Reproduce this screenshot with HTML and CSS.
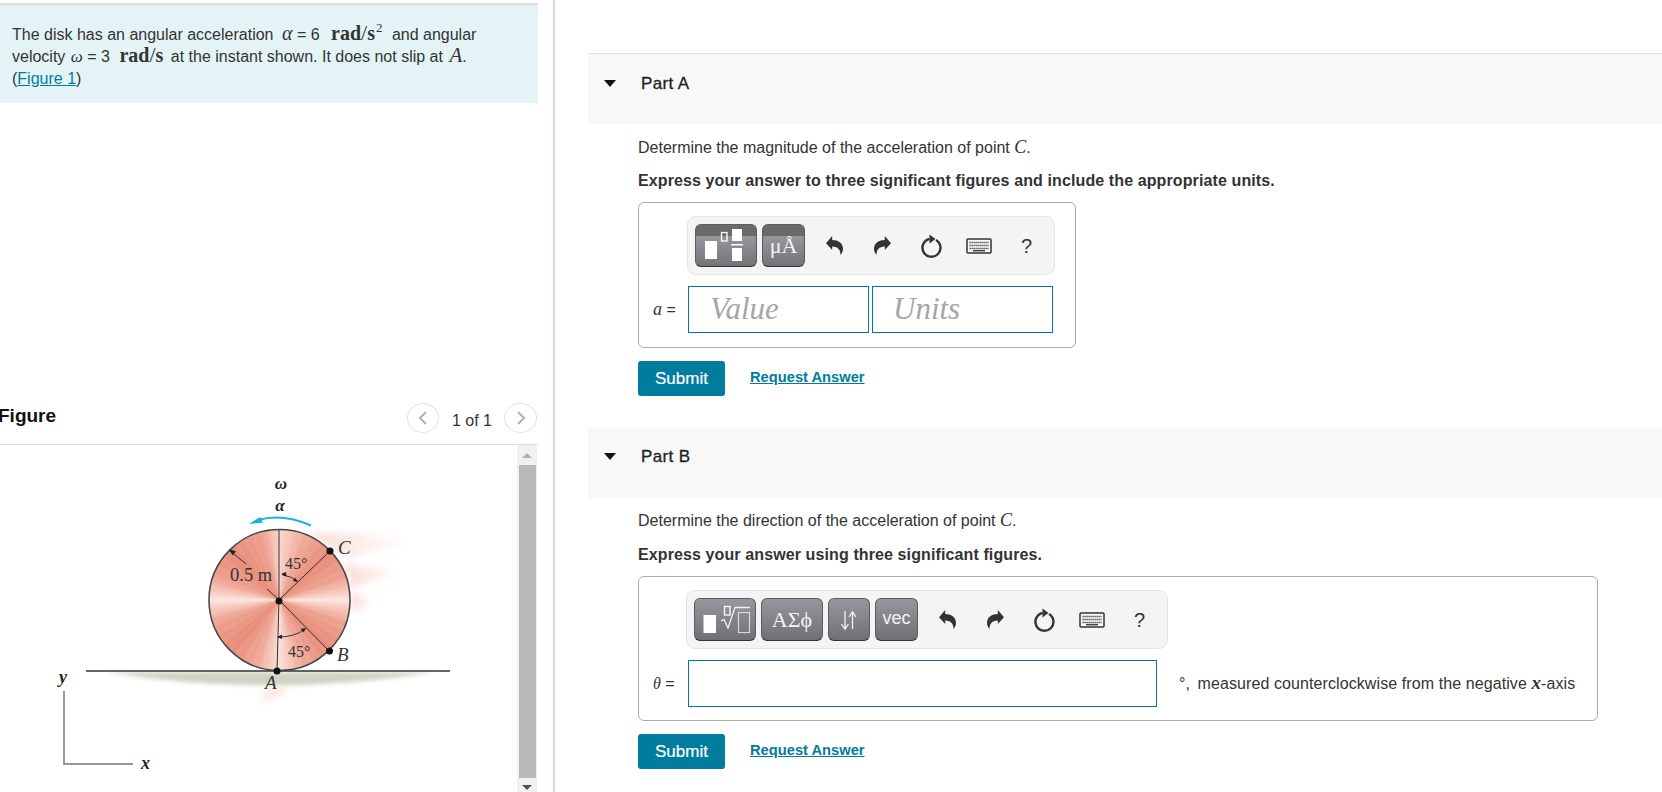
FILE: index.html
```html
<!DOCTYPE html>
<html lang="en">
<head>
<meta charset="utf-8">
<title>Disk problem</title>
<link rel="stylesheet" href="styles.css">
</head>
<body>
<svg class="defs" width="0" height="0" aria-hidden="true">
  <defs>
    <symbol id="i-undo" viewBox="0 0 17 19"><path d="M0 7.300 6.200 0v4C12 4 17 7 17 13c0 2-.8 4-2.500 6 0-5-2.500-8.500-8.300-8.500V14Z"/></symbol>
    <symbol id="i-redo" viewBox="0 0 17 19"><path d="M17 7.300 10.800 0v4C5 4 0 7 0 13c0 2 .8 4 2.500 6 0-5 2.500-8.500 8.300-8.500V14Z"/></symbol>
    <symbol id="i-reset" viewBox="0 0 24 24"><path class="ring" d="M10.500 5A9 9 0 1 0 17 6"/><path d="M10.500.5 16.500 5l-6 4.500Z"/></symbol>
    <symbol id="i-kb" viewBox="0 0 26 16">
      <rect class="kb" x="1" y="1" width="24" height="14" rx="1"/>
      <path class="keys" d="M3.500 4.500h19M3.500 7.500h19M3.500 10.500h19"/>
      <path class="kbar" d="M7 12.700h12"/>
    </symbol>
  </defs>
</svg>
<div class="page">
  <section class="left">
    <div class="intro">
      The disk has an angular acceleration <i class="mi">α</i> = 6 <span class="unit unit-1">rad<span class="sl">/</span>s<sup>2</sup></span> and angular<br>
      velocity <i class="mw">ω</i> = 3 <span class="unit unit-2">rad<span class="sl">/</span>s</span> at the instant shown. It does not slip at <i class="mb mb-a">A</i>.<br>
      (<a href="#fig">Figure 1</a>)
    </div>
    <header class="fig-head" id="fig">
      <h2 class="fig-title">Figure</h2>
      <button class="nav nav-prev" type="button" aria-label="Previous"><svg width="10" height="16" viewBox="0 0 10 16"><path d="M8 2 2 8l6 6"/></svg></button>
      <span class="count">1 of 1</span>
      <button class="nav nav-next" type="button" aria-label="Next"><svg width="10" height="16" viewBox="0 0 10 16"><path d="m2 2 6 6-6 6"/></svg></button>
    </header>
    <div class="fig-body">
      <div class="canvas">
        <div class="disk"></div>
        <svg class="diagram" width="517" height="346" viewBox="0 446 517 346">
          <defs>
            <linearGradient id="st" x1="0" x2="1" y1="0" y2="0"><stop offset="0" stop-color="#f5c0b3" stop-opacity=".6"/><stop offset="1" stop-color="#f8d5cc" stop-opacity="0"/></linearGradient>
            <linearGradient id="dn" x1="1" x2="0" y1="0" y2="1"><stop offset="0" stop-color="#f6b9aa" stop-opacity=".65"/><stop offset="1" stop-color="#f9d5cc" stop-opacity="0"/></linearGradient>
            <filter id="bl" x="-20%" y="-40%" width="140%" height="180%"><feGaussianBlur stdDeviation="3"/></filter>
            <filter id="bs" x="-5%" y="-60%" width="110%" height="220%"><feGaussianBlur stdDeviation="2"/></filter>
          </defs>
          <path class="shadow" d="M105 673 Q270 700 435 673Z"/>
          <g filter="url(#bl)">
            <path fill="url(#st)" d="M308 534 360 534 421 543 372 552 350 559 336 552Z"/>
            <path fill="url(#st)" d="M343 566 372 568 409 574 372 582 350 590 349 578Z"/>
            <path fill="url(#st)" d="M351 595 362 596 376 603 362 610 351 611Z"/>
            <path fill="url(#dn)" d="M266 690 289 690 257 711Z"/>
          </g>
          <path class="ln-ground" d="M86 672H450"/>
          <path class="ln-rim" d="M209 601a70 70 0 1 1 141 0a70 70 0 1 1 -141 0"/>
          <path class="ln" d="M279 531V601L277 672M279 601 330 552M279 601 329 652M246 565 230 552M267 590 279 601"/>
          <path class="ln" d="M282.500 576Q291 577 297 582M278 638Q295 638 305 630"/>
          <path class="tip" d="m229 550 7 2.500-3.500 4ZM281 575l5-2 .5 4.500ZM298 583l-5-1 2-3.500ZM277 638l5-2.500v4.500ZM306 629l-2.500 4.500-3-3.500Z"/>
          <path class="arrow" d="M311 526.500Q283 514 258 521"/>
          <path class="arrow-tip" d="m249 525 11-7 3 5.500Z"/>
          <circle class="dot" cx="279" cy="602" r="3.500"/>
          <circle class="dot" cx="330" cy="552" r="3.500"/>
          <circle class="dot" cx="329.500" cy="652" r="3.500"/>
          <circle class="dot" cx="277" cy="672" r="3.500"/>
          <path class="axis" d="M64 692V765H133"/>
          <text class="t-greek" x="281" y="490" text-anchor="middle">ω</text>
          <text class="t-greek" x="280" y="512" text-anchor="middle">α</text>
          <text class="t-m" x="230" y="582">0.5 m</text>
          <text class="t-plain" x="285" y="570">45°</text>
          <text class="t-plain" x="288" y="658">45°</text>
          <text class="t-ital" x="338" y="555">C</text>
          <text class="t-ital" x="337" y="662">B</text>
          <text class="t-ital" x="265" y="690">A</text>
          <text class="t-bold" x="59" y="684">y</text>
          <text class="t-bold" x="141" y="770">x</text>
        </svg>
      </div>
      <div class="scrollbar">
        <span class="sc-up"></span>
        <span class="sc-thumb"></span>
        <span class="sc-down"></span>
      </div>
    </div>
  </section>
  <div class="divider"></div>
  <main class="right">
    <section class="part part-first">
      <div class="part-bar"><span class="caret"></span><h3 class="part-name">Part A</h3></div>
      <div class="part-body">
        <p class="q">Determine the magnitude of the acceleration of point <i class="mb">C</i>.</p>
        <p class="q q-b">Express your answer to three significant figures and include the appropriate units.</p>
        <div class="answer answer-a">
          <div class="toolbar">
            <span class="tb tb-band tb-w62">
              <svg width="60" height="41" viewBox="1 1 60 41"><rect class="w" x="10" y="17" width="12" height="18"/><rect class="o" x="26.500" y="8.500" width="5.500" height="8.500"/><rect class="w" x="37" y="5" width="10" height="12"/><rect class="w" x="36" y="20" width="12" height="1.500"/><rect class="w" x="37" y="24" width="10" height="13"/></svg>
            </span>
            <span class="tb tb-band tb-w43 tb-serif">μÅ</span>
            <span class="tools">
              <span class="tool"><svg class="ic" width="17" height="19"><use href="#i-undo"/></svg></span>
              <span class="tool"><svg class="ic" width="17" height="19"><use href="#i-redo"/></svg></span>
              <span class="tool"><svg class="ic" width="24" height="24"><use href="#i-reset"/></svg></span>
              <span class="tool"><svg class="ic" width="26" height="16"><use href="#i-kb"/></svg></span>
              <span class="tool help">?</span>
            </span>
          </div>
          <div class="row">
            <span class="lbl"><i class="mb">a</i> =</span>
            <div class="field field-val">Value</div>
            <div class="field field-units">Units</div>
          </div>
        </div>
        <div class="actions"><button class="submit" type="button">Submit</button><a class="req" href="#a">Request Answer</a></div>
      </div>
    </section>
    <section class="part part-second">
      <div class="part-bar"><span class="caret"></span><h3 class="part-name">Part B</h3></div>
      <div class="part-body">
        <p class="q">Determine the direction of the acceleration of point <i class="mb">C</i>.</p>
        <p class="q q-b">Express your answer using three significant figures.</p>
        <div class="answer answer-b">
          <div class="toolbar">
            <span class="tb tb-w62">
              <svg width="60" height="41" viewBox="1 1 60 41"><rect class="w" x="9.500" y="17" width="12.500" height="18"/><rect class="o" x="30.500" y="8.500" width="5.500" height="8.500"/><path class="rad" d="M27 23l3-1.500 4 8.500 7-20.500h15"/><rect class="o2" x="44.500" y="14.500" width="11" height="20"/></svg>
            </span>
            <span class="tb tb-w62b tb-serif">ΑΣϕ</span>
            <span class="tb tb-w42">
              <svg width="24" height="24" viewBox="0 0 24 24"><path class="ar" d="M8 3v17M4.500 16 8 21l3.500-5M15.500 21V4M12 9l3.500-5L19 9"/></svg>
            </span>
            <span class="tb tb-w43b tb-sans">vec</span>
            <span class="tools">
              <span class="tool"><svg class="ic" width="17" height="19"><use href="#i-undo"/></svg></span>
              <span class="tool"><svg class="ic" width="17" height="19"><use href="#i-redo"/></svg></span>
              <span class="tool"><svg class="ic" width="24" height="24"><use href="#i-reset"/></svg></span>
              <span class="tool"><svg class="ic" width="26" height="16"><use href="#i-kb"/></svg></span>
              <span class="tool help">?</span>
            </span>
          </div>
          <div class="row">
            <span class="lbl"><i class="mb mb-t">θ</i> =</span>
            <div class="field field-wide"></div>
            <span class="after"><span class="deg">°,</span> measured counterclockwise from the negative <i class="mb mb-x">x</i>-axis</span>
          </div>
        </div>
        <div class="actions"><button class="submit" type="button">Submit</button><a class="req" href="#b">Request Answer</a></div>
      </div>
    </section>
  </main>
</div>
</body>
</html>
```
FILE: styles.css
```css
* { box-sizing: border-box; }
html, body { margin: 0; padding: 0; height: 792px; overflow: hidden; background: #fff; }
body { font-family: "Liberation Sans", Arial, sans-serif; font-size: 16px; color: #333; line-height: 22px; }
.defs { display: block; height: 0; }
a { color: #007c9e; }

.page { display: flex; height: 792px; }
.left { width: 538px; flex: none; display: flex; flex-direction: column; }
.divider { width: 2px; margin-left: 15px; background: #cfdbe6; flex: none; }
.right { flex: 1; margin-left: 33px; min-width: 0; }

.intro { margin-top: 3px; height: 100px; padding: 19px 0 0 12px; background: #e4f4f6; border-top: 2px solid #ddd; }
.mi { font-family: "Liberation Serif", serif; font-size: 20px; line-height: 0; margin-left: 4px; }
.mw { font-family: "Liberation Serif", serif; font-size: 17px; line-height: 0; margin-left: 1px; }
.mb { font-family: "Liberation Serif", serif; font-size: 18px; font-style: italic; line-height: 0; }
.mb-a { font-size: 21px; margin-left: 2px; }
.mb-t { font-size: 16px; }
.mb-x { font-size: 19px; font-weight: bold; }
.unit { font-family: "Liberation Serif", serif; font-size: 20px; font-weight: bold; line-height: 0; }
.unit-1 { margin: 0 5px 0 7px; }
.unit-2 { margin: 0 3px 0 5px; }
.unit .sl { font-weight: normal; font-size: 22px; }
.unit sup { font-size: 13px; font-weight: normal; line-height: 0; margin-left: 1px; }

.fig-head { margin-top: 289px; height: 53px; display: flex; align-items: center; border-bottom: 1px solid #ddd; flex: none; }
.fig-title { margin: 0 0 5px -2px; font-size: 19px; font-weight: bold; color: #111; line-height: 24px; flex: 1; }
.nav { height: 30px; padding: 0; border: 1px solid #e2e2e2; border-radius: 50%; background: #fff; display: flex; align-items: center; justify-content: center; }
.nav svg path { fill: none; stroke: #a9b4ba; stroke-width: 2; }
.nav-prev { width: 32px; }
.nav-next { width: 33px; margin: 0 1px 0 12px; }
.count { margin: 6px 0 0 13px; color: #333; }

.fig-body { flex: 1; display: flex; min-height: 0; overflow: hidden; }
.canvas { position: relative; width: 517px; flex: none; }
.disk { position: absolute; left: 209px; top: 85px; width: 141px; height: 140px; border-radius: 50%;
  background:
    repeating-conic-gradient(rgba(255,255,255,.05) 0 4deg, rgba(255,255,255,0) 4deg 8deg),
    conic-gradient(#f9d6cc 0deg, #f0a898 22deg, #e88b78 48deg, #eea08f 70deg, #f6c6ba 82deg, #fbe6e0 90deg, #f6c6ba 98deg, #eea08f 110deg, #e88b78 135deg, #f0a898 160deg, #fbe0d8 180deg, #f0a898 200deg, #e88b78 225deg, #eea08f 250deg, #f6c6ba 262deg, #fbe6e0 270deg, #f6c6ba 278deg, #eea08f 290deg, #e88b78 315deg, #eea08f 345deg, #f9d6cc 360deg); }
.diagram { position: absolute; left: 0; top: 0; }
.shadow { fill: #d0d3c2; filter: url(#bs); }
.ln-ground { stroke: #333; stroke-width: 1.300; fill: none; }
.ln-rim { stroke: #444; stroke-width: 1.500; fill: none; }
.ln { stroke: #333; stroke-width: 1; fill: none; }
.tip { fill: #222; }
.arrow { stroke: #1aaee5; stroke-width: 2.200; fill: none; }
.arrow-tip { fill: #1aaee5; }
.dot { fill: #111; }
.axis { stroke: #777; stroke-width: 1.500; fill: none; }
.t-greek { font: italic bold 17px "Liberation Serif", serif; fill: #222; }
.t-plain { font: 16px "Liberation Serif", serif; fill: #333; }
.t-m { font: 18.500px "Liberation Serif", serif; fill: #333; }
.t-ital { font: italic 19px "Liberation Serif", serif; fill: #333; }
.t-bold { font: italic bold 18px "Liberation Serif", serif; fill: #222; }

.scrollbar { width: 20px; flex: none; background: #f1f1f1; display: flex; flex-direction: column; align-items: center; }
.sc-up { margin-top: 8px; width: 0; height: 0; border: 5px solid transparent; border-top: 0; border-bottom: 5px solid #b0b0b0; }
.sc-thumb { margin-top: 7px; width: 17px; height: 313px; background: #b9b9b9; }
.sc-down { margin-top: 7px; width: 0; height: 0; border: 5px solid transparent; border-bottom: 0; border-top: 5px solid #505050; }

.part-first { margin-top: 53px; }
.part-first .part-bar { border-top: 1px solid #ddd; }
.part + .part { margin-top: 31px; }
.part-bar { height: 71px; background: #f8f8f8; display: flex; align-items: flex-start; padding: 19px 0 0 16px; }
.caret { width: 0; height: 0; margin-top: 7px; border-style: solid; border-width: 7px 6.500px 0; border-color: #111 transparent transparent; }
.part-name { margin: 0 0 0 25px; font-size: 17px; letter-spacing: .35px; font-weight: normal; color: #222; -webkit-text-stroke: .3px #222; line-height: 22px; }
.part-body { padding-left: 50px; }
.q { margin: 12px 0 0; line-height: 22px; }
.part-first .q:first-child { margin-top: 13px; }
.q-b { margin-top: 11px; font-weight: bold; letter-spacing: .11px; }
.part-second .q-b { margin-top: 12px; }

.answer { margin-top: 10px; height: 146px; border: 1px solid #aaa; border-radius: 6px; padding: 13px 0 0 48px; }
.answer-a { width: 438px; }
.answer-b { width: 960px; height: 145px; padding-left: 47px; }
.toolbar { display: inline-flex; height: 59px; padding: 7px 4px 0 7px; background: #f4f4f4; border: 1px solid #e4e4e4; border-radius: 9px; vertical-align: top; }
.tb { height: 43px; margin-right: 5px; flex: none; border: 1px solid #5c5c5c; border-bottom-color: #333; border-radius: 6px; color: #f4f4f4; display: flex; align-items: center; justify-content: center; background: linear-gradient(#97979e, #6f6f74); overflow: hidden; }
.tb-band { background: linear-gradient(#6a6a6a 0 26%, #97979e 26%, #737378); }
.tb-w62 { width: 62px; }
.tb-w43 { width: 43px; margin-right: 0; }
.tb-w62b { width: 62px; }
.tb-w42 { width: 42px; }
.tb-w43b { width: 43px; margin-right: 0; }
.tb-serif { font-family: "Liberation Serif", serif; font-size: 22px; }
.tb-sans { font-size: 18px; padding-bottom: 3px; }
.tb .w { fill: #fff; }
.tb .o { fill: none; stroke: #fff; stroke-width: 1.300; }
.tb .o2 { fill: none; stroke: #d8d8d8; stroke-width: 1.200; }
.tb .rad { fill: none; stroke: #f2f2f2; stroke-width: 1.300; }
.tb .ar { fill: none; stroke: #f4f4f4; stroke-width: 1.300; }
.tools { display: flex; margin-left: 6px; margin-top: -7px; height: 57px; }
.tool { width: 47.900px; display: flex; align-items: center; justify-content: center; color: #333; }
.ic { fill: #333; display: block; }
.ring { fill: none; stroke: #333; stroke-width: 2.400; }
.kb { fill: #fafafa; stroke: #333; stroke-width: 1.500; }
.keys { fill: none; stroke: #333; stroke-width: 1.600; stroke-dasharray: 1.200 .8; }
.kbar { fill: none; stroke: #444; stroke-width: 1.500; }
.help { font-size: 20px; }

.row { display: flex; align-items: center; margin-top: 11px; height: 47px; }
.lbl { width: 49px; flex: none; padding-left: 14px; margin-left: -48px; }
.answer-b .lbl { margin-left: -47px; }
.field { height: 47px; border: 1px solid #007a9c; background: #fff; flex: none; font: italic 31px "Liberation Serif", serif; color: #a6a6a6; line-height: 43px; }
.field-val { width: 181px; padding-left: 21px; }
.field-units { width: 181px; margin-left: 3px; padding-left: 20px; }
.field-wide { width: 469px; }
.after { margin-left: 22px; white-space: nowrap; letter-spacing: .09px; }
.deg { margin-right: 3px; }

.actions { display: flex; align-items: center; margin-top: 13px; }
.submit { width: 87px; height: 35px; padding: 0; border: 0; border-radius: 3px; background: #007c9e; color: #fff; font: 17px "Liberation Sans", Arial, sans-serif; -webkit-text-stroke: .2px #fff; }
.req { margin: 0 0 3px 25px; color: #007c9e; font-size: 14.700px; font-weight: bold; }
```
